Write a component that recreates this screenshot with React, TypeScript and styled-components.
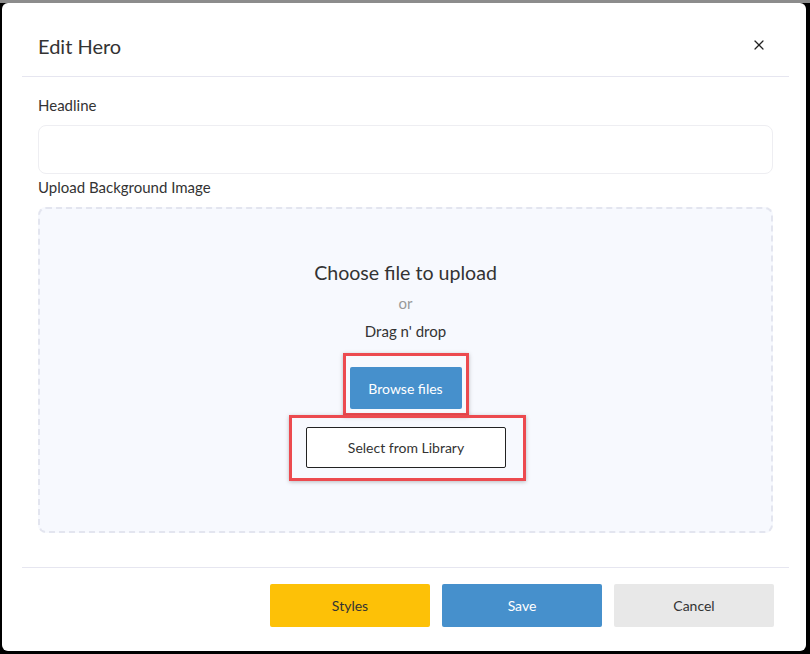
import styled, { createGlobalStyle } from 'styled-components'
import { X } from 'lucide-react'

const GlobalStyle = createGlobalStyle`
  html, body {
    margin: 0;
    padding: 0;
    background: #000;
  }
  * {
    box-sizing: border-box;
  }
  body {
    font-family: Lato, "Open Sans", sans-serif;
    color: #333;
  }
`

export default function App() {
  return <Frame>
    <GlobalStyle />
    <Modal>
      <Header>
        <Title>Edit Hero</Title>
        <CloseButton aria-label="close">
          <X size={16} strokeWidth={1.8} />
        </CloseButton>
      </Header>

      <Body>
        <Label>Headline</Label>
        <Input />

        <Label>Upload Background Image</Label>
        <DropZone>
          <DropTitle>Choose file to upload</DropTitle>
          <Or>or</Or>
          <DropText>Drag n' drop</DropText>

          <Highlight pad="11px 4px 4px">
            <BrowseButton>Browse files</BrowseButton>
          </Highlight>

          <Highlight pad="9px 17px 10px 14px" offset="-1px 0 0 4px">
            <LibraryButton>Select from Library</LibraryButton>
          </Highlight>
        </DropZone>
      </Body>

      <Footer>
        <ActionButton bg="#fdc107" fg="#333">Styles</ActionButton>
        <ActionButton bg="#4690cc" fg="#fff">Save</ActionButton>
        <ActionButton bg="#e8e8e8" fg="#333">Cancel</ActionButton>
      </Footer>
    </Modal>
  </Frame>
}

const Frame = styled.div`
  width: 810px;
  height: 654px;
  padding: 3px 4px 3px 2px;
  background: linear-gradient(#8c8c8c 0 3px, #000 3px);
`

const Modal = styled.div`
  height: 648px;
  background: #fff;
  border-radius: 6px;
  padding: 0 17px 0 20px;
  display: flex;
  flex-direction: column;
`

const Header = styled.div`
  height: 74px;
  padding: 12px 16px 0;
  display: flex;
  align-items: center;
  justify-content: space-between;
  border-bottom: 1px solid #e6e6f0;
`

const Title = styled.h2`
  margin: 0;
  font-size: 20px;
  font-weight: 400;
  color: #333;
`

const CloseButton = styled.button`
  border: none;
  background: none;
  padding: 0;
  margin: 0 6px 2px 0;
  display: flex;
  color: #222;
  cursor: pointer;
`

const Body = styled.div`
  padding: 18px 16px 0;
  display: flex;
  flex-direction: column;
`

const Label = styled.label`
  font-size: 15px;
  line-height: 20px;
  color: #333;
  margin-bottom: 10px;
`

const Input = styled.input`
  height: 49px;
  border: 1px solid #eeeef2;
  border-radius: 8px;
  margin-bottom: 3px;
  outline: none;
`

const DropZone = styled.div`
  height: 326px;
  border: 2px dashed #e3e5ef;
  border-radius: 8px;
  background: #f7f9fe;
  padding-top: 52px;
  display: flex;
  flex-direction: column;
  align-items: center;
`

const DropTitle = styled.div`
  font-size: 19.6px;
  line-height: 24px;
  color: #333;
`

const Or = styled.div`
  font-size: 15px;
  line-height: 20px;
  color: #999;
  margin-top: 8px;
`

const DropText = styled.div`
  font-size: 15px;
  line-height: 20px;
  color: #333;
  margin-top: 8px;
  margin-bottom: 12px;
`

const Highlight = styled.div<{ pad: string; offset?: string }>`
  border: 3px solid #ec4a4f;
  padding: ${p => p.pad};
  margin: ${p => p.offset || '0'};
  box-shadow: 0 1px 4px rgba(0, 0, 0, 0.25);
  position: relative;
`

const BrowseButton = styled.button`
  width: 112px;
  height: 42px;
  border: none;
  border-radius: 2px;
  background: #4690cc;
  color: #fff;
  font-family: Lato, sans-serif;
  font-size: 14px;
  display: block;
`

const LibraryButton = styled.button`
  width: 200px;
  height: 41px;
  border: 1px solid #222;
  border-radius: 2px;
  background: #fff;
  color: #333;
  font-family: Lato, sans-serif;
  font-size: 14px;
  display: block;
`

const Footer = styled.div`
  margin-top: 34px;
  border-top: 1px solid #e6e6f0;
  padding: 16px 15px 0 0;
  display: flex;
  justify-content: flex-end;
  gap: 12px;
`

const ActionButton = styled.button<{ bg: string; fg: string }>`
  width: 160px;
  height: 43px;
  border: none;
  border-radius: 2px;
  background: ${p => p.bg};
  color: ${p => p.fg};
  font-family: Lato, sans-serif;
  font-size: 14px;
`
